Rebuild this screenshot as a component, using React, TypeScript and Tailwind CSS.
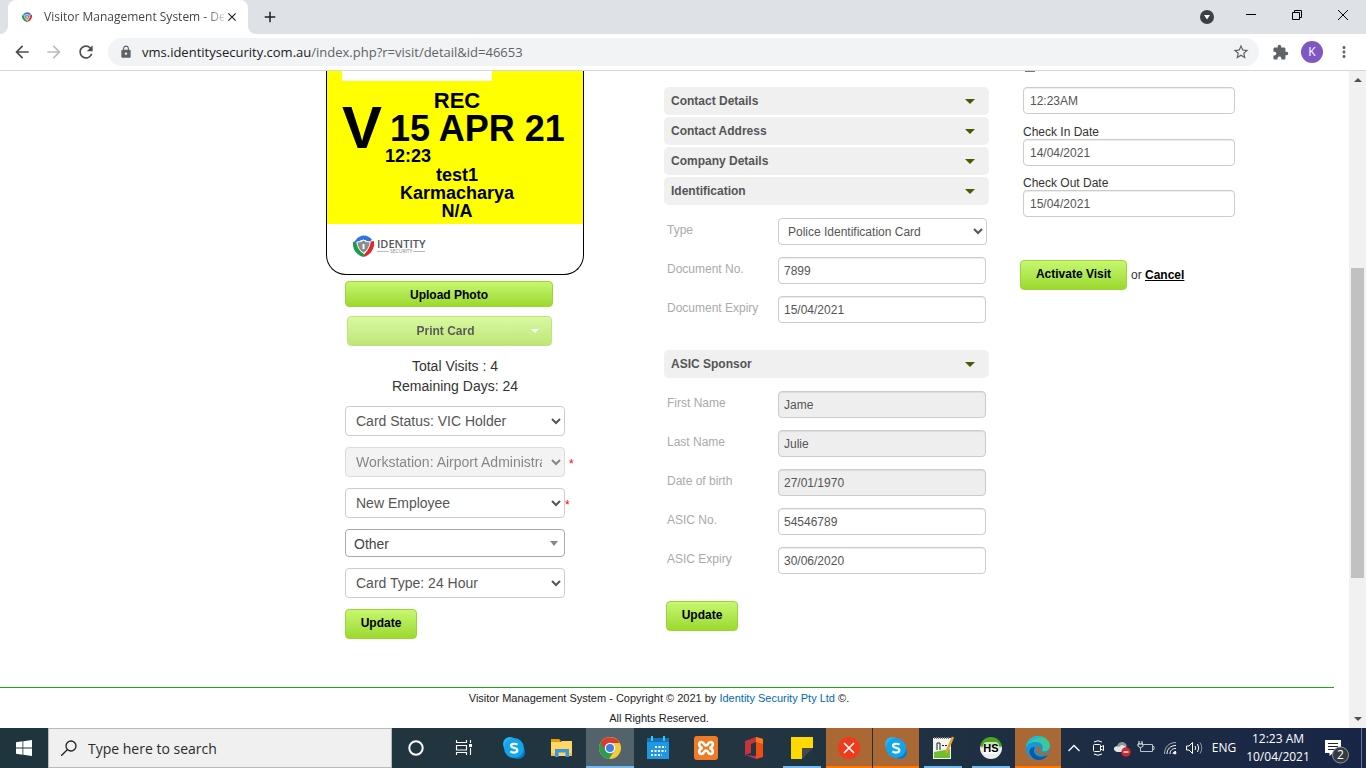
import React from "react";
import { MdArrowBack, MdArrowForward, MdClose, MdAdd, MdRefresh, MdLock, MdStarBorder, MdExtension, MdMoreVert } from "react-icons/md";

const green =
  "rounded border border-[#9cd635] bg-linear-to-b from-[#c6f76e] to-[#9cd92b] text-[12px] font-bold text-black";
const inputBase =
  "h-[27px] rounded border border-[#ccc] px-[5px] text-[12px] text-[#555] shadow-[inset_0_1px_1px_rgba(0,0,0,0.075)]";

function Shield({ className }: { className: string }) {
  return (
    <svg viewBox="0 0 22 22" preserveAspectRatio="none" className={className} aria-hidden="true">
      <path d="M3 5C7-1 16-1 20 5L16 7C12 4 9 4 6 7L1 7Z" fill="#2f74e0" />
      <path d="M0 7L6 7C5 13 7 17 12 19L11 22C3 20-1 14 0 7Z" fill="#1e9a4a" />
      <path d="M16 7L22 6C23 13 19 20 11 22L12 19C16 16 17 12 16 7Z" fill="#dd2b2b" />
      <path d="M4 7Q9 7 11 5Q13 7 18 7Q17 15 11 18Q5 15 4 7Z" fill="#8b8d90" stroke="#fff" strokeWidth="1" />
      <path d="M11 9V14" stroke="#fff" strokeWidth="2" />
    </svg>
  );
}

function BrowserHeader() {
  return (
    <header>
      <div className="flex h-[34px] items-end bg-[#dee1e6] text-[#202124]">
        <svg viewBox="0 0 8 8" className="size-2"><path d="M8 0V8H0A8 8 0 0 0 8 0Z" fill="#fff" /></svg>
        <div className="flex h-[34px] w-[240px] items-center rounded-t-lg bg-white pr-2 pl-3">
          <Shield className="ml-[2px] mr-3 h-[10px] w-[10px] shrink-0" />
          <span className="w-[180px] overflow-hidden bg-linear-to-r from-[#3c4043] from-90% to-[#3c404333] bg-clip-text text-[12px] leading-[18px] whitespace-nowrap text-transparent">
            Visitor Management System - De
          </span>
          <button aria-label="Close tab" className="flex size-4 items-center justify-center"><MdClose size={14} /></button>
        </div>
        <svg viewBox="0 0 8 8" className="size-2"><path d="M0 0V8H8A8 8 0 0 1 0 0Z" fill="#fff" /></svg>
        <button aria-label="New tab" className="ml-1 flex h-[34px] w-5 items-center justify-center"><MdAdd size={18} /></button>
        <div className="ml-auto flex h-[34px] items-center">
          <button aria-label="Search tabs" className="mr-[7px] flex w-7 justify-center">
            <svg viewBox="0 0 14 14" className="size-[14px]"><circle cx="7" cy="7" r="7" fill="#3c4043" /><path d="M4 5H10L7 9.500Z" fill="#fff" /></svg>
          </button>
          <button aria-label="Minimize" className="flex h-8 w-[46px] items-center justify-center pb-1">
            <svg viewBox="0 0 10 10" className="size-[10px]"><path d="M0 4.500H10" stroke="#000" /></svg>
          </button>
          <button aria-label="Restore" className="flex h-8 w-[46px] items-center justify-center pb-1">
            <svg viewBox="0 0 10 10" className="size-[10px]" fill="none" stroke="#000"><path d="M.5 2.500H7.500V9.500H.5ZM2.500 2.500V.5H9.500V7.500H7.500" /></svg>
          </button>
          <button aria-label="Close window" className="flex h-8 w-[46px] items-center justify-center pb-1">
            <svg viewBox="0 0 10 10" className="size-[10px]" stroke="#000"><path d="M0 0L10 10M10 0L0 10" /></svg>
          </button>
        </div>
      </div>
      <div className="flex h-[37px] items-center border-b border-[#d5d7da] bg-white text-[#5f6368]">
        <button aria-label="Back" className="ml-3"><MdArrowBack size={20} color="#4a4d51" /></button>
        <button aria-label="Forward" className="ml-3"><MdArrowForward size={20} color="#babcbe" /></button>
        <button aria-label="Reload" className="ml-3"><MdRefresh size={20} color="#4a4d51" /></button>
        <div className="ml-3 flex h-7 flex-1 items-center rounded-full bg-[#f1f3f4] pr-[9px] pl-[11px]">
          <MdLock size={14} />
          <span className="ml-[9px] flex-1 text-[13px] leading-5 text-[#5f6368]">
            <span className="text-[#202124]">vms.identitysecurity.com.au</span>/index.php?r=visit/detail&amp;id=46653
          </span>
          <button aria-label="Bookmark"><MdStarBorder size={18} /></button>
        </div>
        <button aria-label="Extensions" className="ml-[13px]"><MdExtension size={17} /></button>
        <button aria-label="Profile" className="ml-3 size-[22px] rounded-full bg-[#7e57c2] text-[12px] text-white">K</button>
        <button aria-label="Menu" className="mr-[13px] ml-3"><MdMoreVert size={18} /></button>
      </div>
    </header>
  );
}

function VisitorCard() {
  return (
    <section className="w-[258px] overflow-hidden rounded-b-[20px] border border-t-0 border-black bg-white font-bold text-black">
      <div className="bg-[#ff0] pb-1">
        <div className="ml-[15px] h-[10px] w-[150px] bg-white" />
        <p className="mt-3 pl-1 text-center text-[22px] leading-4">REC</p>
        <div className="flex pl-[15px]">
          <span className="text-[60px] leading-[38px]">V</span>
          <div className="ml-[3px]">
            <p className="pl-[5px] text-[36px] leading-10 whitespace-nowrap">15 APR 21</p>
            <p className="text-[18px] leading-[14px]">12:23</p>
          </div>
        </div>
        <div className="mt-[3px] pl-1 text-center text-[18px] leading-[18px]">
          <p>test1</p>
          <p>Karmacharya</p>
          <p>N/A</p>
        </div>
      </div>
      <div className="flex h-[50px] items-center pb-[6px] pl-[26px]">
        <Shield className="h-[22px] w-[21px]" />
        <div className="ml-[3px] font-['Open_Sans',sans-serif] text-[#55575a]">
          <p className="text-[11px] leading-[11px] font-semibold">IDENTITY</p>
          <div className="flex items-center gap-px text-[5px] leading-[5px] font-normal text-[#888]">
            <span className="h-px flex-1 bg-[#bbb]" />SECURITY<span className="h-px flex-1 bg-[#bbb]" />
          </div>
        </div>
      </div>
    </section>
  );
}

const bigSelect = "h-[30px] w-[220px] rounded border border-[#ccc] px-1.5 text-[14px] text-[#555]";

function CardColumn() {
  return (
    <div className="w-[258px] shrink-0">
      <VisitorCard />
      <div className="flex flex-col items-start pl-[19px]">
        <button className={`${green} mt-1.5 h-[26px] w-[208px] pt-[2px]`}>Upload Photo</button>
        <button disabled className={`${green} mt-[9px] ml-[2px] flex h-[30px] w-[205px] items-center opacity-65`}>
          <span className="flex-1 pl-3">Print Card</span>
          <svg viewBox="0 0 8 4" className="mr-3 h-1 w-2"><path d="M0 0H8L4 4Z" fill="#fff" /></svg>
        </button>
        <div className="mt-[10px] w-[220px] text-center text-[14px] leading-5 text-[#333]">
          <p>Total Visits : 4</p>
          <p>Remaining Days: 24</p>
        </div>
        <div className="mt-[10px] flex flex-col gap-[11px]">
          <select aria-label="Card status" className={`${bigSelect} bg-white`}><option>Card Status: VIC Holder</option></select>
          <div className="flex items-center gap-1">
            <select disabled aria-label="Workstation" className={`${bigSelect} bg-[#eee] opacity-70`}><option>Workstation: Airport Administration</option></select>
            <span className="pt-1 text-[12px] leading-none text-[#f00]">*</span>
          </div>
          <div className="flex items-center">
            <select aria-label="Visit reason" className={`${bigSelect} bg-white`}><option>New Employee</option></select>
            <span className="pt-1 text-[12px] leading-none text-[#f00]">*</span>
          </div>
          <div className="relative w-[220px]">
            <select aria-label="Other" className="block h-7 w-full appearance-none rounded border border-[#aaa] bg-white px-2 pt-[2px] text-[14px] text-[#444]"><option>Other</option></select>
            <svg viewBox="0 0 8 5" className="pointer-events-none absolute top-3 right-[7px] h-[5px] w-2"><path d="M0 0H8L4 5Z" fill="#888" /></svg>
          </div>
          <select aria-label="Card type" className={`${bigSelect} bg-white`}><option>Card Type: 24 Hour</option></select>
          <button className={`${green} h-[30px] w-[72px] pb-[2px]`}>Update</button>
        </div>
      </div>
    </div>
  );
}

function SectionHead({ title }: { title: string }) {
  return (
    <button className="flex h-7 w-full items-center justify-between rounded-[5px] bg-[#f0f0f0] pr-[14px] pl-[7px] text-[12px] font-bold text-[#555]">
      {title}
      <svg viewBox="0 0 10 5" className="mt-px h-[5px] w-[10px]"><path d="M0 0H10L5 5Z" fill="#4b5a00" /></svg>
    </button>
  );
}

function Field({ label, value, id, locked }: { label: string; value: string; id: string; locked?: boolean }) {
  return (
    <div className="flex h-[27px]">
      <label htmlFor={id} className="w-[111px] pt-1 text-[12px] leading-4 text-[#aaa]">{label}</label>
      <input id={id} defaultValue={value} readOnly={locked} className={`${inputBase} w-[208px] ${locked ? "bg-[#eee]" : "bg-white"}`} />
    </div>
  );
}

function DetailsColumn() {
  return (
    <div className="w-[325px] shrink-0 pt-4">
      <div className="flex flex-col gap-[2px]">
        <SectionHead title="Contact Details" />
        <SectionHead title="Contact Address" />
        <SectionHead title="Company Details" />
        <SectionHead title="Identification" />
      </div>
      <div className="mt-[13px] mb-[27px] flex flex-col gap-3 pl-[3px]">
        <div className="flex h-[27px]">
          <label htmlFor="doc-type" className="w-[111px] pt-1 text-[12px] leading-4 text-[#aaa]">Type</label>
          <select id="doc-type" className="h-[27px] w-[209px] rounded border border-[#ccc] bg-white px-[5px] text-[12px] text-[#555]"><option>Police Identification Card</option></select>
        </div>
        <Field id="doc-no" label="Document No." value="7899" />
        <Field id="doc-expiry" label="Document Expiry" value="15/04/2021" />
      </div>
      <SectionHead title="ASIC Sponsor" />
      <div className="mt-[13px] mb-[27px] flex flex-col gap-3 pl-[3px]">
        <Field id="first" label="First Name" value="Jame" locked />
        <Field id="last" label="Last Name" value="Julie" locked />
        <Field id="dob" label="Date of birth" value="27/01/1970" locked />
        <Field id="asic" label="ASIC No." value="54546789" />
        <Field id="asic-expiry" label="ASIC Expiry" value="30/06/2020" />
      </div>
      <button className={`${green} ml-[2px] h-[30px] w-[72px] pb-[2px]`}>Update</button>
    </div>
  );
}

function VisitColumn() {
  return (
    <div className="w-[212px] shrink-0 text-[12px] text-[#333]">
      <div className="h-4"><div className="ml-[2px] h-px w-[10px] bg-[#767676]" /></div>
      <input aria-label="Check in time" defaultValue="12:23AM" className={`${inputBase} block w-full pl-1.5`} />
      <label htmlFor="in" className="block pt-[11px] leading-[14px]">Check In Date</label>
      <input id="in" defaultValue="14/04/2021" className={`${inputBase} block w-full pl-1.5`} />
      <label htmlFor="out" className="block pt-[11px] leading-[13px]">Check Out Date</label>
      <input id="out" defaultValue="15/04/2021" className={`${inputBase} block w-full pl-1.5`} />
      <div className="mt-[43px] -ml-[3px] flex items-center gap-1 text-[12px]">
        <button className={`${green} h-[30px] w-[107px] pb-[2px]`}>Activate Visit</button>
        <span>or <a href="#cancel" className="font-bold text-black underline">Cancel</a></span>
      </div>
    </div>
  );
}

function Scrollbar() {
  return (
    <div className="flex w-[17px] shrink-0 flex-col items-center bg-[#f1f1f1]" aria-hidden="true">
      <svg viewBox="0 0 8 4" className="my-[7px] h-1 w-2"><path d="M4 0L8 4H0Z" fill="#505050" /></svg>
      <div className="w-[13px] grow-[179]" />
      <div className="w-[13px] grow-[310] bg-[#c1c1c1]" />
      <div className="w-[13px] grow-[132]" />
      <svg viewBox="0 0 8 4" className="my-[7px] h-1 w-2"><path d="M0 0H8L4 4Z" fill="#505050" /></svg>
    </div>
  );
}

function Skype() {
  return (
    <svg viewBox="0 0 24 24" className="size-6">
      <circle cx="8" cy="8" r="7" fill="#28b5f4" />
      <circle cx="16" cy="16" r="7" fill="#0a79d0" />
      <circle cx="12" cy="12" r="10" fill="#12a5ed" />
      <path d="M15.500 8.700C13.500 7.400 9 7.200 9 9.800C9 12.500 15.300 11.200 15.300 14.200C15.300 17.200 10.500 17 8.400 15.400" fill="none" stroke="#fff" strokeWidth="2.200" />
    </svg>
  );
}

const idle = "w-12";
const open = "mx-[5px] w-[38px] border-b-2 border-[#76b9ed] pt-[2px]";
const alerting = "w-[46px] border-b-2 border-[#ff7800] bg-[#aa6934] pt-[2px]";

const taskIcons: { name: string; cls: string; icon: React.ReactNode }[] = [
  { name: "Cortana", cls: idle, icon: <svg viewBox="0 0 24 24" className="size-6"><circle cx="12" cy="12" r="6.700" fill="none" stroke="#fff" strokeWidth="2" /></svg> },
  { name: "Task View", cls: "mr-[2px] w-12", icon: (
    <svg viewBox="0 0 24 24" className="size-6" fill="none" stroke="#fff"><path d="M4.500 4V6.500H14.500V4M4.500 19V16.500H14.500V19M4.500 9.500H14.500V14H4.500ZM18.500 4V7M18.500 12V19" strokeWidth="1.100" /><path d="M17 8H20V11H17Z" fill="#fff" stroke="none" /></svg>
  ) },
  { name: "Skype", cls: idle, icon: <Skype /> },
  { name: "File Explorer", cls: idle, icon: (
    <svg viewBox="0 0 24 24" className="size-6"><path d="M1 3H9L11 5H10V8H1Z" fill="#e8a009" /><path d="M1 6H10L12 5H22V20H1Z" fill="#ffd864" /><path d="M5 21V13H19V21H15.500V16.500H8.500V21Z" fill="#3a98de" /><path d="M1 17H5V20H1ZM19 17H22V20H19Z" fill="#f3c24b" /></svg>
  ) },
  { name: "Chrome", cls: "w-12 border-b-2 border-[#76b9ed] bg-[#52636b] pt-[2px]", icon: (
    <svg viewBox="0 0 24 24" className="size-6"><circle cx="12" cy="12" r="11" fill="#f5cb3c" /><path d="M12 12L2.500 6.500A11 11 0 0 0 11 23L16.500 14.500Z" fill="#2e9b50" /><path d="M2.500 6.500A11 11 0 0 1 21.600 7H12L7.500 14.500Z" fill="#d63c30" /><circle cx="12" cy="12" r="5.200" fill="#fff" /><circle cx="12" cy="12" r="4" fill="#3f7fe8" /></svg>
  ) },
  { name: "Calendar", cls: idle, icon: (
    <svg viewBox="0 0 24 24" className="size-6"><path d="M1 5H23V23H1Z" fill="#1f97e4" /><path d="M1 2H23V6H1Z" fill="#1273b8" /><path d="M5 0H7V5H5ZM17 0H19V5H17Z" fill="#38c7ef" /><path d="M9 11H20M5 15H20M5 19H16" stroke="#fff" strokeWidth="2" strokeDasharray="2 1.500" /></svg>
  ) },
  { name: "XAMPP", cls: idle, icon: (
    <svg viewBox="0 0 24 24" className="size-6"><rect width="24" height="24" rx="3" fill="#f07a25" /><path d="M8.500 12C4.500 11 4 6 7.500 6C10.500 6 9.500 9.500 12 9.500C14.500 9.500 13.500 6 16.500 6C20 6 19.500 11 15.500 12C19.500 13 20 18 16.500 18C13.500 18 14.500 14.500 12 14.500C9.500 14.500 10.500 18 7.500 18C4 18 4.500 13 8.500 12Z" fill="none" stroke="#fff" strokeWidth="2.600" /></svg>
  ) },
  { name: "Office", cls: idle, icon: (
    <svg viewBox="0 0 24 24" className="size-6"><path d="M3 5L14 1V6L9 8V17L3 19Z" fill="#c4343a" /><path d="M14 1L21 3V21L14 23Z" fill="#ee4d14" /><path d="M3 19L14 20V23Z" fill="#b52d72" /><path d="M14 1L21 3V8L14 6Z" fill="#ff791e" /></svg>
  ) },
  { name: "Sticky Notes", cls: open, icon: (
    <svg viewBox="0 0 24 24" className="size-6"><path d="M1 1H23V12H12V23H1Z" fill="#ffda00" /><path d="M12 23V12H23Z" fill="#46494b" /></svg>
  ) },
  { name: "Error monitor", cls: `${alerting} mr-px`, icon: (
    <svg viewBox="0 0 24 24" className="size-6"><circle cx="12" cy="12" r="11" fill="#ef3a1b" /><path d="M7 7L17 17M17 7L7 17" stroke="#fff" strokeWidth="1.700" /></svg>
  ) },
  { name: "Skype call", cls: alerting, icon: <Skype /> },
  { name: "Notepad++", cls: open, icon: (
    <svg viewBox="0 0 24 24" className="size-6"><path d="M2 2H20V23H2Z" fill="#f1f4ed" /><path d="M3 16L19 13V22H3Z" fill="#6fbe2c" /><path d="M3 2H19" stroke="#777" strokeWidth="2" strokeDasharray="1 1" /><path d="M6 14V7H9V14M11 9.500H13M14 9.500H16" stroke="#222" fill="none" /><path d="M22 1L15 17" stroke="#e3a237" strokeWidth="2.500" /></svg>
  ) },
  { name: "HeidiSQL", cls: open, icon: (
    <span className="flex size-[22px] items-center justify-center rounded-full bg-linear-to-b from-[#4da51e] from-40% to-[#eee] to-50% font-['Liberation_Sans',sans-serif] text-[11px] font-bold text-black">
      <span className="rounded-sm bg-white/70 leading-3">HS</span>
    </span>
  ) },
  { name: "Edge", cls: alerting, icon: (
    <svg viewBox="0 0 24 24" className="size-6"><circle cx="12" cy="12" r="12" fill="#1597d8" /><path d="M0 11C1 4 6 0 12 0C20 0 24 6 24 10C24 14 20 16 16 15C18 11 16 6 10 6C5 6 1 8 0 11Z" fill="#39c8a0" /><path d="M0 11C1 4 6 0 12 0C14 0 16 .5 17 1C10 2 4 5 0 11Z" fill="#23b8d9" /><path d="M9 11C5 17 12 24 22 19C19 23 16 24 12 24C3 23 0 11 9 11Z" fill="#0d57a5" /><path d="M10 13C10 10 14 9 15 12C15.500 14 14 15 15 16C18 18 22 16 24 13C24 17 20 20 16 19C12 18.500 10 16 10 13Z" fill="#aa6934" /></svg>
  ) },
];

function Taskbar() {
  return (
    <footer className="flex h-10 bg-linear-to-r from-[#1f353d] via-[#223541] via-55% to-[#192546] font-['Open_Sans',sans-serif] text-white">
      <button aria-label="Start" className="flex w-12 items-center justify-center">
        <svg viewBox="0 0 16 16" className="size-4" fill="#fff"><path d="M0 2.200L6.500 1.300V7.500H0ZM7.300 1.200L16 0V7.500H7.300ZM0 8.400H6.500V14.700L0 13.800ZM7.300 8.400H16V16L7.300 14.800Z" /></svg>
      </button>
      <label className="flex w-[344px] items-center border border-[#b8b8b8] bg-[#f0f0f0] pl-3">
        <svg viewBox="0 0 16 16" className="size-4" fill="none" stroke="#222" strokeWidth="1.300"><circle cx="10" cy="6" r="5" /><path d="M6.500 9.500L0 16" /></svg>
        <input aria-label="Search" placeholder="Type here to search" className="ml-[11px] w-[240px] text-[14px] placeholder:text-[#2b2b2b]" />
      </label>
      {taskIcons.map((t) => (
        <button key={t.name} aria-label={t.name} className={`flex h-10 shrink-0 items-center justify-center ${t.cls}`}>{t.icon}</button>
      ))}
      <div className="ml-auto flex items-center">
        <svg viewBox="0 0 24 24" className="size-6" fill="none" stroke="#fff" strokeWidth="1.300"><path d="M6.500 15L12 9.500L17.500 15" /></svg>
        <svg viewBox="0 0 24 24" className="size-6" fill="none" stroke="#fff"><rect x="7.500" y="8.500" width="7" height="7" rx="1" /><path d="M14.500 11L17.500 9.500V14.500L14.500 13M8 6Q12 3.500 16 6M8 18Q12 20.500 16 18" /></svg>
        <svg viewBox="0 0 24 24" className="size-6"><path d="M7 12C7 5 15 4 17 10L12 14Z" fill="#8f959c" /><path d="M5 15C2 12 6 9 9 11C11 8 16 9 17 13C17 16 15 16 14 16H7Z" fill="#e3e5e7" /><circle cx="16" cy="16" r="4.700" fill="#d9222a" /><path d="M13.500 16H18.500" stroke="#fff" strokeWidth="1.500" /></svg>
        <svg viewBox="0 0 24 24" className="size-6" fill="none" stroke="#fff"><path d="M9.500 8.500H18.500V15.500H6.500V12M18.500 10.500H20V13.500H18.500" stroke="#bcc2cb" /><path d="M5 5V8M8 5V8M4 8H9V9.500C9 12 4 12 4 9.500Z" /></svg>
        <svg viewBox="0 0 24 24" className="size-6" fill="none" stroke="#fff"><path d="M6.500 18C6.500 11 11 6.500 18 6.500" stroke="#a9b0bb" /><path d="M9 18C9 13 12.500 9.500 18 9.500M12 18C12 14.500 14 12.500 18 12.500M15 18C15 16.500 16 15.500 18 15.500" /><circle cx="17" cy="17" r="1" fill="#fff" /></svg>
        <svg viewBox="0 0 24 24" className="size-6" fill="none" stroke="#fff"><path d="M4.500 10H7L10.500 6.500V17.500L7 14H4.500ZM13 10Q14.500 12 13 14M15.500 8Q18 12 15.500 16" /><path d="M18 6.500Q21.500 12 18 17.500" stroke="#8f98a6" /></svg>
        <span className="ml-1 w-[28px] text-center text-[12px]">ENG</span>
        <div className="w-[80px] text-center text-[12px] leading-[18px]">
          <p>12:23 AM</p>
          <p>10/04/2021</p>
        </div>
        <button aria-label="Notifications" className="relative mr-[9px] h-10 w-[34px]">
          <svg viewBox="0 0 34 40" className="h-10 w-[34px]"><path d="M7 12H23V25H15L11.500 28V25H7Z" fill="#fff" /><path d="M10 15.500H20M10 18.500H20M10 21.500H17" stroke="#223" /><circle cx="22.500" cy="27" r="8" fill="#353a40" stroke="#92969c" /></svg>
          <span className="absolute top-[18px] left-[18px] w-[9px] text-center text-[12px] leading-[18px]">2</span>
        </button>
        <div className="mr-1 h-10 w-px bg-[#6b7388]" />
      </div>
    </footer>
  );
}

export default function App() {
  return (
    <div className="flex min-h-screen flex-col bg-white font-['Open_Sans',sans-serif]">
      <BrowserHeader />
      <div className="flex flex-1 font-['Liberation_Sans',Arial,sans-serif]">
        <div className="flex min-w-0 flex-1 flex-col">
          <main className="flex flex-1 pl-[326px]">
            <CardColumn />
            <div className="w-20 shrink-0" />
            <DetailsColumn />
            <div className="w-[34px] shrink-0" />
            <VisitColumn />
          </main>
          <div className="mr-[15px] border-t border-[#17a817] pr-4 text-center text-[11px] leading-5 text-[#222]">
            <p>Visitor Management System - Copyright © 2021 by <a href="#company" className="text-[#0069b4]">Identity Security Pty Ltd</a> ©.</p>
            <p>All Rights Reserved.</p>
          </div>
        </div>
        <Scrollbar />
      </div>
      <Taskbar />
    </div>
  );
}
